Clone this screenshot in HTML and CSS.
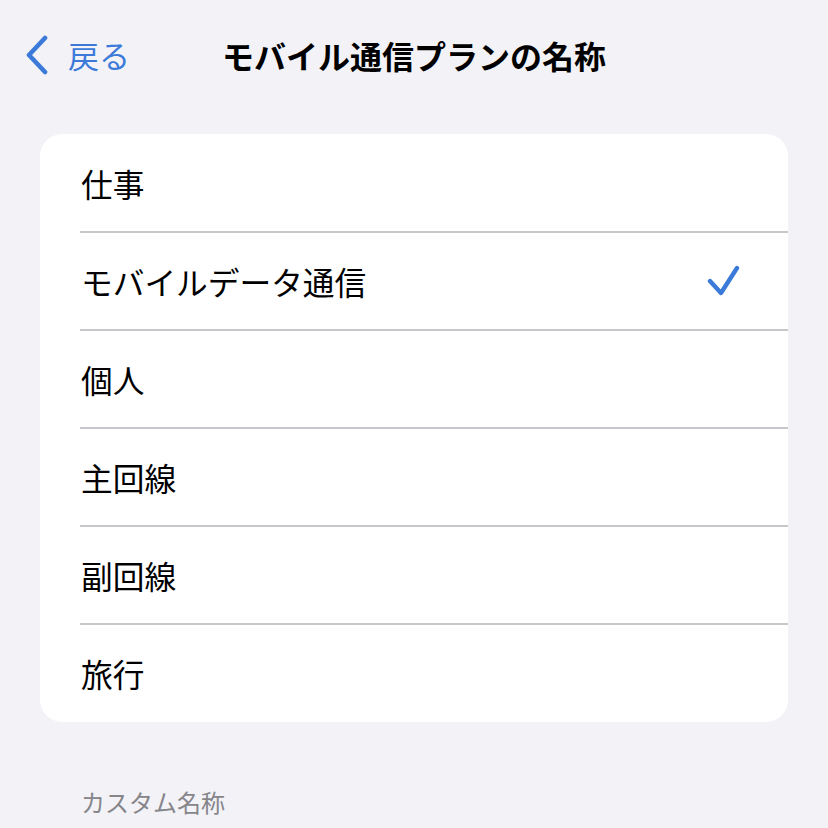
FILE: index.html
```html
<!DOCTYPE html>
<html lang="ja">
<head>
<meta charset="utf-8">
<link rel="stylesheet" href="styles.css">
</head>
<body>
<div class="screen">
  <header class="nav">
    <div class="back">
      <svg class="chev" width="26" height="40" viewBox="0 0 26 40"><path d="M20 3 L4 20 L20 37" fill="none" stroke="#3c7ad9" stroke-width="4.6" stroke-linecap="round" stroke-linejoin="round"/></svg>
      <span class="back-text">戻る</span>
    </div>
    <h1 class="title">モバイル通信プランの名称</h1>
  </header>
  <ul class="list">
    <li class="row"><span class="label">仕事</span></li>
    <li class="row"><span class="label">モバイルデータ通信</span>
      <svg class="check" width="34" height="34" viewBox="0 0 34 34"><path d="M4 17 L15 29 L31 4" fill="none" stroke="#3c7ad9" stroke-width="4.4" stroke-linecap="round" stroke-linejoin="round"/></svg>
    </li>
    <li class="row"><span class="label">個人</span></li>
    <li class="row"><span class="label">主回線</span></li>
    <li class="row"><span class="label">副回線</span></li>
    <li class="row"><span class="label">旅行</span></li>
  </ul>
  <div class="section-label">カスタム名称</div>
</div>
</body>
</html>
```

FILE: styles.css
```css
html, body {
  margin: 0;
  padding: 0;
  background: #f2f2f7;
}
body {
  font-family: "Noto Sans CJK JP", "Noto Sans", sans-serif;
  color: #000;
}
.screen {
  width: 828px;
  height: 828px;
  overflow: hidden;
}
.nav {
  position: relative;
  height: 110px;
  display: flex;
  align-items: center;
  justify-content: center;
}
.back {
  position: absolute;
  left: 25px;
  top: 35px;
  display: flex;
  align-items: center;
  gap: 17px;
}
.chev {
  display: block;
}
.back-text {
  font-size: 31px;
  line-height: 40px;
  color: #3c7ad9;
}
.title {
  margin: 0;
  font-size: 32px;
  font-weight: 700;
  line-height: 40px;
  letter-spacing: 0;
}
.list {
  list-style: none;
  margin: 24px 40px 0 40px;
  padding: 0;
  background: #fff;
  border-radius: 22px;
  overflow: hidden;
}
.row {
  height: 98px;
  display: flex;
  align-items: center;
  justify-content: space-between;
  padding-left: 41px;
  padding-right: 48px;
  position: relative;
}
.row + .row::before {
  content: "";
  position: absolute;
  left: 40px;
  right: 0;
  top: -1px;
  height: 1.5px;
  background: #c8c8cc;
}
.label {
  font-size: 31.7px;
  line-height: 40px;
}
.check {
  display: block;
}
.section-label {
  margin: 64px 0 0 81px;
  font-size: 24px;
  line-height: 32px;
  color: #85858a;
}
```
